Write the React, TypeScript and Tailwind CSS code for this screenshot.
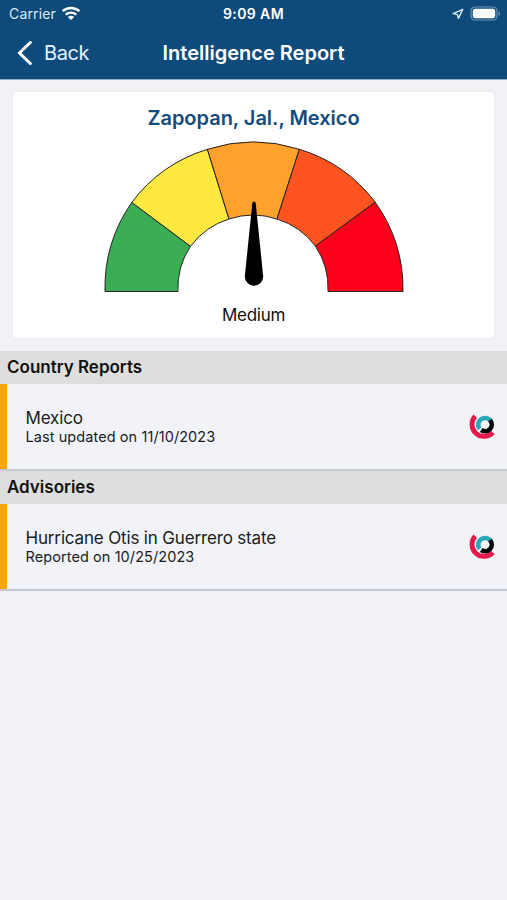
import React from 'react';

interface ReportItem {
  id: string;
  name: string;
  detail: string;
}

interface ReportSectionProps {
  title: string;
  items: ReportItem[];
}

const countryReports: ReportItem[] = [
  { id: 'mx', name: 'Mexico', detail: 'Last updated on 11/10/2023' },
];

const advisories: ReportItem[] = [
  { id: 'otis', name: 'Hurricane Otis in Guerrero state', detail: 'Reported on 10/25/2023' },
];

const riskColors = ['#3aad55', '#ffe83f', '#ffa22d', '#ff5320', '#ff001b'];

// Slice corners along the outer and inner edge of the half ring, left to right
const outerPoints = ['1 150', '27.8 60.9', '103.4 7.8', '195.4 7.8', '271.2 60.7', '299 150'];
const innerPoints = ['73.9 150', '86.5 104.8', '125 77.5', '173 77.5', '211.4 104.6', '224 150'];

const slicePath = (index: number) =>
  `M${outerPoints[index]} A149.5 149.5 0 0 1 ${outerPoints[index + 1]} L${innerPoints[index + 1]} A76 76 0 0 0 ${innerPoints[index]} Z`;

const RiskGauge: React.FC = () => (
  <svg width="300" height="152" viewBox="0 -0.5 300 152" className="block">
    {riskColors.map((color, index) => (
      <path key={color} d={slicePath(index)} fill={color} stroke="#222" strokeWidth="1" strokeLinejoin="round" />
    ))}
    <path d="M148.3 61.5 Q148.5 60 150 60 Q151.5 60 151.7 61.5 L159.2 135 A9.2 9.2 0 1 1 140.8 135 Z" fill="#000" />
  </svg>
);

const WifiIcon: React.FC = () => (
  <svg width="20" height="15" viewBox="0 0 20 15" fill="none" stroke="#fff" strokeWidth="2.4">
    <path d="M1.6 5.2 C6.3 .9 13.7 .9 18.4 5.2" />
    <path d="M4.7 8.6 C7.7 5.9 12.3 5.9 15.3 8.6" />
    <path d="M10 14 L6.9 10.9 C8.6 9.3 11.4 9.3 13.1 10.9 Z" fill="#fff" stroke="none" />
  </svg>
);

const LocationIcon: React.FC = () => (
  <svg width="12" height="12" viewBox="0 0 12 12" fill="none" stroke="#dbe9f5" strokeWidth="1.4" strokeLinejoin="round">
    <path d="M10.8 1.3 L1.2 5.6 L5.3 6.6 L6.4 10.4 Z" />
  </svg>
);

const BatteryIcon: React.FC = () => (
  <svg width="31" height="15" viewBox="0 0 31 15">
    <rect x="1" y="1" width="26" height="13" rx="4" fill="none" stroke="#6f94b5" strokeWidth="1.2" />
    <rect x="2.8" y="2.8" width="22.4" height="9.4" rx="2.3" fill="#fff" />
    <path d="M28.6 5.2 C30.7 6 30.7 9 28.6 9.8 Z" fill="#6f94b5" />
  </svg>
);

const SourceIcon: React.FC = () => (
  <svg width="28" height="28" viewBox="0 0 28 28" fill="none" className="shrink-0">
    <path d="M6.2 4.2 A11.7 11.7 0 0 0 23.9 20.6" stroke="#e5174b" strokeWidth="4.8" />
    <path d="M10.6 16.8 A6.7 6.7 0 1 1 21.4 8.7" stroke="#28a8ba" strokeWidth="4.6" />
    <path d="M21 8 A6.7 6.7 0 0 1 12.2 18" stroke="#000" strokeWidth="4.6" />
  </svg>
);

const ReportSection: React.FC<ReportSectionProps> = ({ title, items }) => (
  <section>
    <h2 className="flex h-[33px] items-center bg-[#dedede] pl-[7px] text-[17px] font-semibold text-[#111]">{title}</h2>
    <ul>
      {items.map((item) => (
        <li
          key={item.id}
          className="flex h-[87px] items-center justify-between border-b-2 border-b-[#c5c8d0] bg-[#f1f3f8]"
        >
          <div className="flex h-full items-center">
            <div className="h-full w-[7px] bg-[#ffa500]" />
            <div className="pl-[18.5px] text-[#1b1b1d]">
              <p className="text-[17px] leading-[20px] tracking-[-0.16px]">{item.name}</p>
              <p className="text-[14.5px] leading-[18px] tracking-[0.08px]">{item.detail}</p>
            </div>
          </div>
          <div className="pr-[10px] pb-[2px]">
            <SourceIcon />
          </div>
        </li>
      ))}
    </ul>
  </section>
);

const App: React.FC = () => {
  return (
    <div className="min-h-[900px] w-full bg-[#f0f2f6] font-['Inter',sans-serif]">
      <header className="h-[80px] border-b border-[#8fb0cf] bg-[#0f4b7a] text-white">
        <div className="grid h-[27px] grid-cols-3 items-center">
          <div className="flex items-center gap-[5px] pl-[9px]">
            <span className="text-[14px] tracking-[0.15px] text-[#dbe9f5]">Carrier</span>
            <WifiIcon />
          </div>
          <span className="text-center text-[14px] font-semibold tracking-[0.4px]">9:09 AM</span>
          <div className="flex items-center justify-end gap-[6px] pr-[6px]">
            <LocationIcon />
            <BatteryIcon />
          </div>
        </div>
        <div className="grid h-[51px] grid-cols-[1fr_auto_1fr] items-center">
          <button className="flex items-center gap-[12px] pl-[17px] text-[20px] tracking-[-0.4px] text-[#e6f2fc]">
            <svg width="15" height="24" viewBox="0 0 15 24" fill="none" stroke="#fff" strokeWidth="3">
              <path d="M13.3 1.5 L2.5 12 L13.3 22.5" strokeLinecap="round" />
            </svg>
            <span>Back</span>
          </button>
          <h1 className="text-[20px] font-semibold">Intelligence Report</h1>
        </div>
      </header>

      <main>
        <div className="mx-[13px] mt-[12px] mb-[13px] flex h-[246px] flex-col items-center rounded-[4px] bg-white pt-[12px] shadow-[0_0_4px_rgba(0,0,0,0.04)]">
          <p className="text-[20px] leading-[28px] font-semibold tracking-[-0.02px] text-[#134b7c]">Zapopan, Jal., Mexico</p>
          <div className="mt-[9px]">
            <RiskGauge />
          </div>
          <p className="mt-[10px] text-[17px] leading-[24px] tracking-[-0.25px] text-[#111]">Medium</p>
        </div>
        <ReportSection title="Country Reports" items={countryReports} />
        <ReportSection title="Advisories" items={advisories} />
      </main>
    </div>
  );
};

export default App;
